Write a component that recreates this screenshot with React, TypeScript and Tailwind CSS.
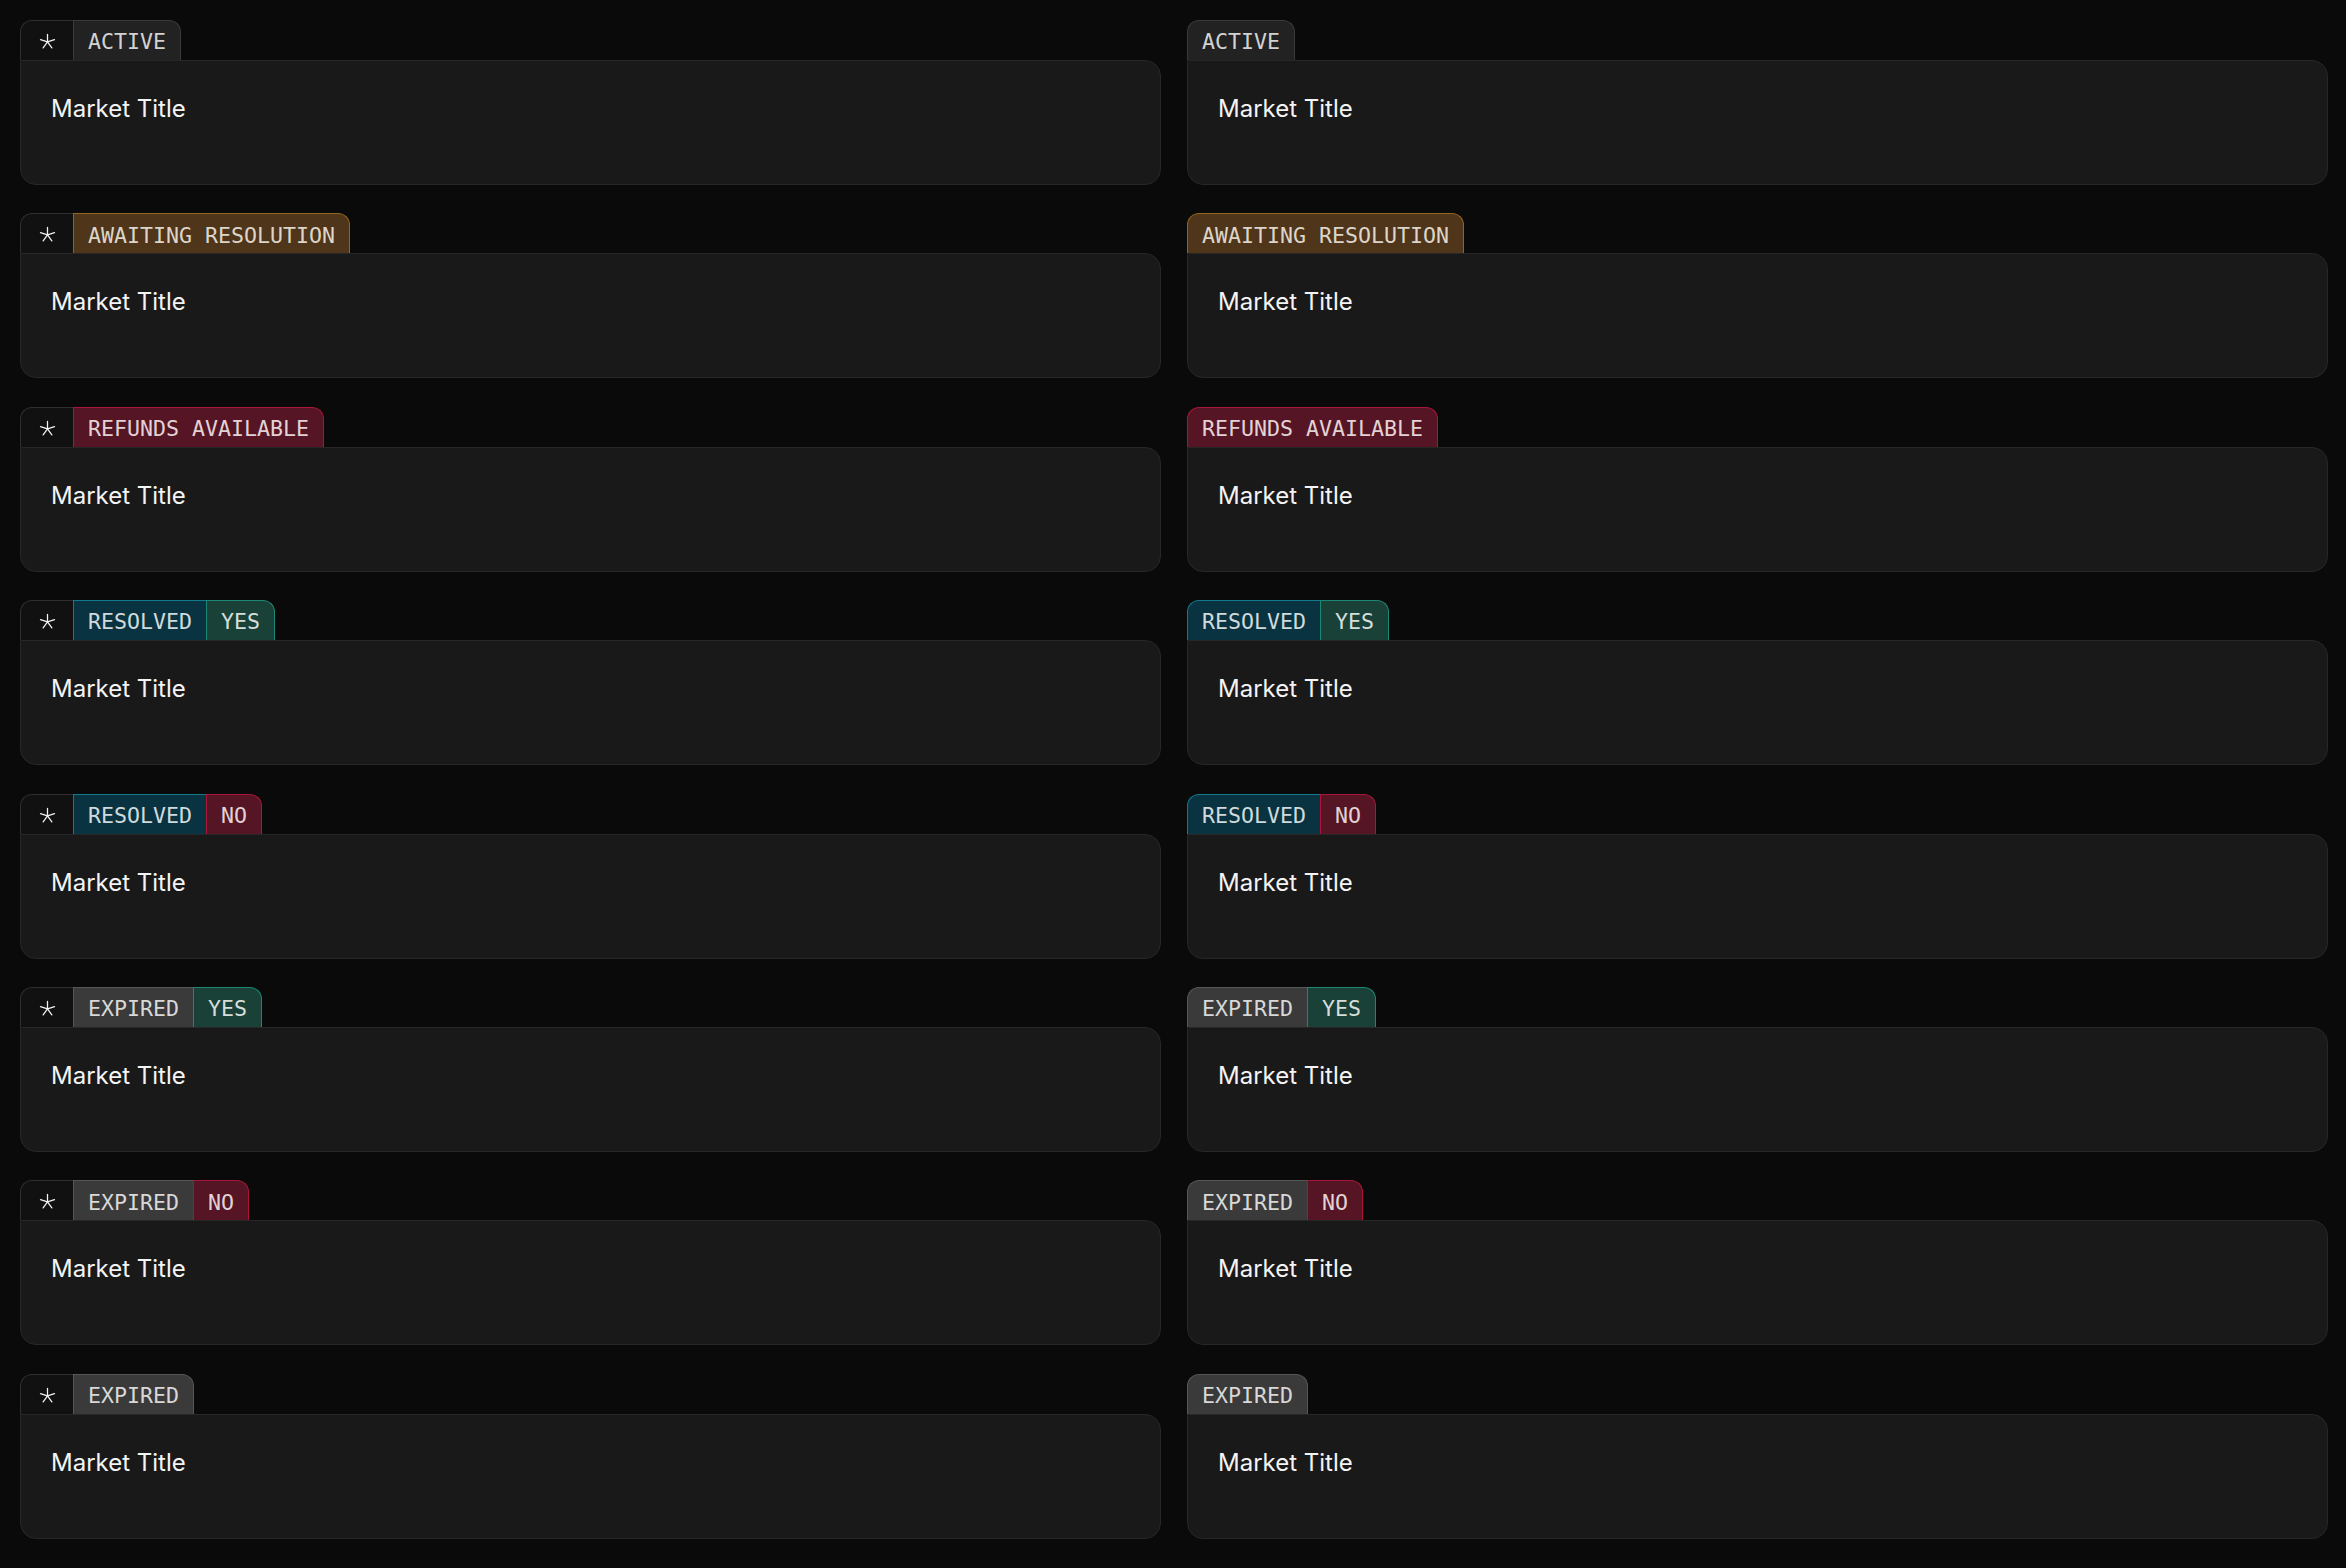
import React from "react";

type Seg = { label: string; bg: string; border: string; text: string };

const S: Record<string, Seg> = {
  active: { label: "ACTIVE", bg: "bg-[#222222]", border: "border-[#3a3a3a]", text: "text-[#d2d2d2]" },
  awaiting: { label: "AWAITING RESOLUTION", bg: "bg-[#4f3519]", border: "border-[#93641f]", text: "text-[#ddd5ca]" },
  refunds: { label: "REFUNDS AVAILABLE", bg: "bg-[#561524]", border: "border-[#a8173a]", text: "text-[#e3d2d5]" },
  resolved: { label: "RESOLVED", bg: "bg-[#0a3341]", border: "border-[#137a8e]", text: "text-[#cfdadd]" },
  yes: { label: "YES", bg: "bg-[#1a4138]", border: "border-[#1d8775]", text: "text-[#d5dedb]" },
  no: { label: "NO", bg: "bg-[#561524]", border: "border-[#a8173a]", text: "text-[#e3d2d5]" },
  expired: { label: "EXPIRED", bg: "bg-[#3a3a3a]", border: "border-[#565656]", text: "text-[#d8d8d8]" },
};

const rows: Seg[][] = [
  [S.active],
  [S.awaiting],
  [S.refunds],
  [S.resolved, S.yes],
  [S.resolved, S.no],
  [S.expired, S.yes],
  [S.expired, S.no],
  [S.expired],
];

function Star() {
  return (
    <svg width="17" height="17" viewBox="0 0 16 16" fill="none" stroke="#f2f2f2" strokeWidth="1.2" strokeLinecap="round">
      <path d="M8 8.4 L8 1.4 M8 8.4 L14.6 6.2 M8 8.4 L12.1 14 M8 8.4 L3.9 14 M8 8.4 L1.4 6.2" />
    </svg>
  );
}

function Card({ segs, star }: { segs: Seg[]; star: boolean }) {
  return (
    <div className="flex flex-col">
      <div className="flex h-[40px] items-stretch">
        {star && (
          <div className="flex w-[53px] items-center justify-center rounded-tl-[12px] border-l border-t border-[#2f2f2f] bg-[#111111] pt-[2px]">
            <Star />
          </div>
        )}
        {segs.map((s, i) => {
          const first = i === 0;
          const last = i === segs.length - 1;
          return (
            <div
              key={i}
              className={[
                "flex items-center px-[14px] pt-[3px] border-t border-l text-[21.6px] leading-none",
                s.bg,
                s.border,
                s.text,
                last ? "border-r rounded-tr-[12px]" : "",
                first && !star ? "rounded-tl-[12px]" : "",
              ].join(" ")}
              style={{ fontFamily: '"DejaVu Sans Mono", "Liberation Mono", monospace' }}
            >
              {s.label}
            </div>
          );
        })}
      </div>
      <div className="h-[125px] border border-[#272727] bg-[#191919] px-[30px] pt-[32px] rounded-b-[16px] rounded-tr-[16px]">
        <div
          className="text-[24px] leading-[32px] font-normal text-[#f4f4f4]"
          style={{ fontFamily: 'Inter, "Noto Sans", sans-serif' }}
        >
          Market Title
        </div>
      </div>
    </div>
  );
}

export default function App() {
  return (
    <div className="min-h-screen w-full bg-[#0a0a0a] pl-[20px] pr-[18px] pt-[20px] pb-[28px]">
      <div className="grid grid-cols-2 gap-x-[26px] gap-y-[28.4px]">
        {rows.map((segs, i) => (
          <React.Fragment key={i}>
            <Card segs={segs} star={true} />
            <Card segs={segs} star={false} />
          </React.Fragment>
        ))}
      </div>
    </div>
  );
}
